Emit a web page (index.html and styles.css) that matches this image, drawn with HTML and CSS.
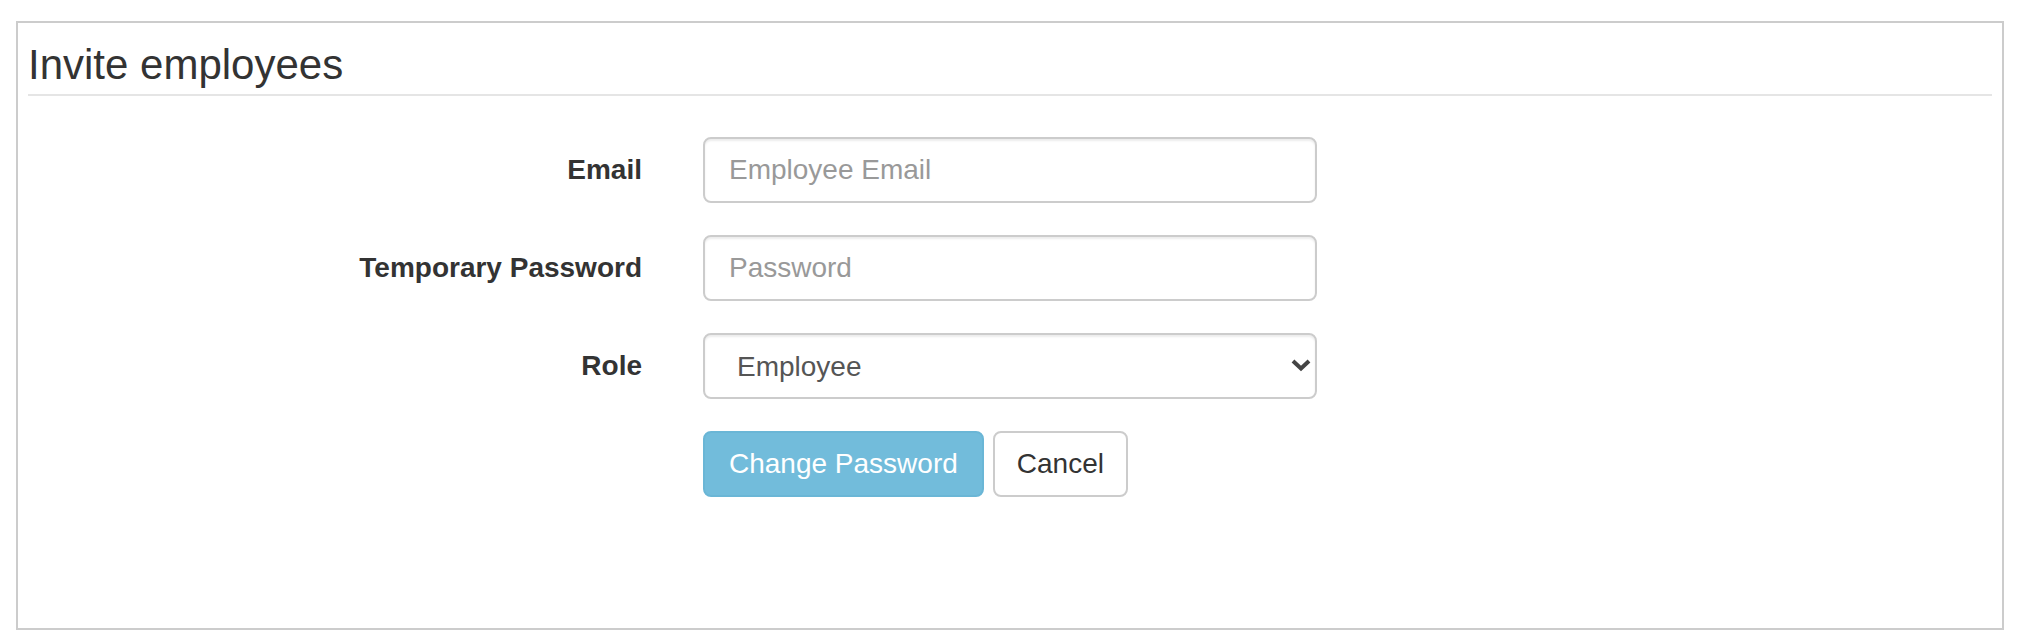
FILE: index.html
```html
<!DOCTYPE html>
<html lang="en">
<head>
<meta charset="utf-8">
<title>Invite employees</title>
<link rel="stylesheet" href="styles.css">
</head>
<body>
<div class="panel">
  <h1 class="title">Invite employees</h1>
  <form class="form">
    <label class="label" for="email">Email</label>
    <input class="control" id="email" type="email" placeholder="Employee Email">

    <label class="label" for="pw">Temporary Password</label>
    <input class="control" id="pw" type="password" placeholder="Password">

    <label class="label" for="role">Role</label>
    <div class="select-wrap">
      <select class="control select" id="role">
        <option>Employee</option>
        <option>Manager</option>
        <option>Admin</option>
      </select>
      <svg class="chevron" width="22" height="14" viewBox="0 0 22 14" aria-hidden="true"><path d="M3 3 L11 10.5 L19 3" fill="none" stroke="#444" stroke-width="4" stroke-linecap="butt" stroke-linejoin="miter"/></svg>
    </div>

    <div class="actions">
      <button type="button" class="btn btn-info">Change Password</button>
      <button type="button" class="btn btn-default">Cancel</button>
    </div>
  </form>
</div>
</body>
</html>
```
FILE: styles.css
```css
html, body {
  margin: 0;
  padding: 0;
  background: #fff;
}

body {
  font-family: "Liberation Sans", Arial, Helvetica, sans-serif;
  color: #333;
  font-size: 28px;
}

.panel {
  box-sizing: border-box;
  margin: 21px 0 0 16px;
  width: 1988px;
  height: 609px;
  border: 2px solid #ccc;
  padding: 0 10px;
}

.title {
  margin: 18px 0 0;
  padding: 0 0 5px 0;
  font-size: 42px;
  line-height: 48px;
  font-weight: 400;
  color: #333;
  border-bottom: 2px solid #e5e5e5;
}

.form {
  margin-top: 41px;
  display: grid;
  grid-template-columns: 614px 614px;
  column-gap: 61px;
  row-gap: 32px;
  align-items: center;
}

.label {
  text-align: right;
  font-weight: 700;
  font-size: 28px;
  line-height: 40px;
  color: #333;
}

.control {
  box-sizing: border-box;
  width: 614px;
  height: 66px;
  margin: 0;
  border: 2px solid #ccc;
  border-radius: 8px;
  padding: 0 24px;
  font-family: inherit;
  font-size: 28px;
  color: #555;
  background: #fff;
  box-shadow: inset 0 2px 2px rgba(0, 0, 0, 0.075);
  outline: none;
}

.control::placeholder {
  color: #999;
}

.select-wrap {
  position: relative;
  width: 614px;
  height: 66px;
}

.select {
  appearance: none;
  -webkit-appearance: none;
  padding-left: 32px;
  padding-right: 50px;
}

.chevron {
  position: absolute;
  right: 5px;
  top: 25px;
  pointer-events: none;
}

.actions {
  grid-column: 2;
  display: flex;
  gap: 9px;
}

.btn {
  box-sizing: border-box;
  height: 66px;
  margin: 0;
  border: 2px solid transparent;
  border-radius: 8px;
  padding: 0 24px;
  font-family: inherit;
  font-size: 28px;
  line-height: 1;
  cursor: pointer;
}

.btn-info {
  background: #72bcdb;
  border-color: #6ab6d6;
  color: #fff;
}

.btn-default {
  background: #fff;
  border-color: #ccc;
  color: #333;
  padding: 0 22px;
}
```
